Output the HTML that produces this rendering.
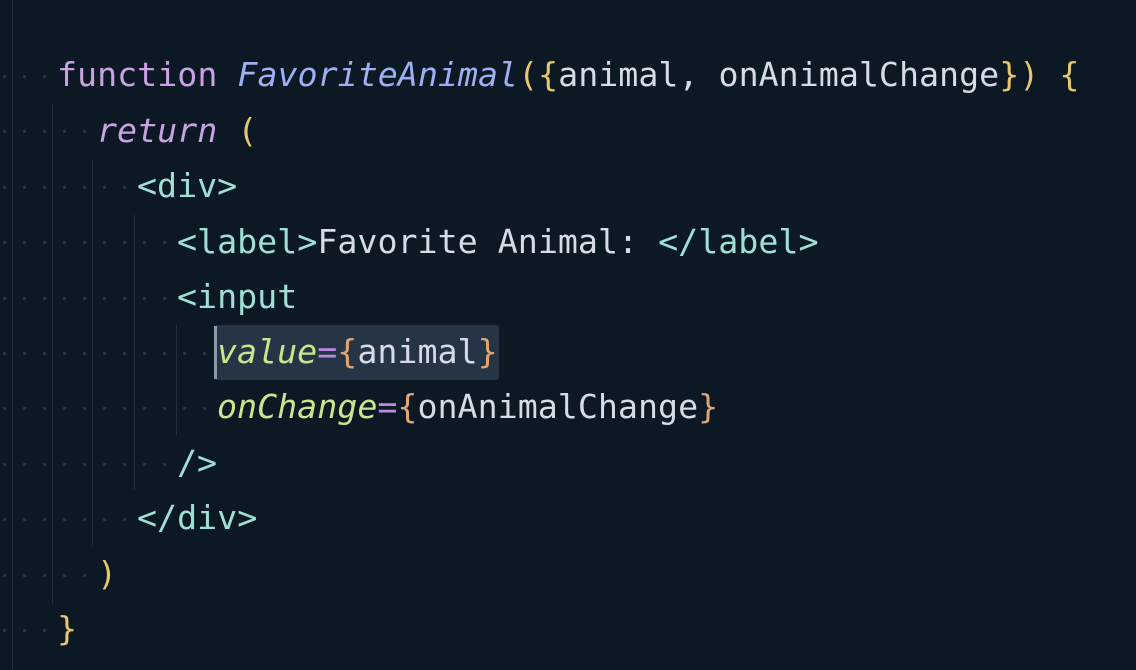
<!DOCTYPE html>
<html><head><style>
body{margin:0;width:1136px;height:670px;background:#0c1824;overflow:hidden;position:relative;font-family:"DejaVu Sans Mono","Liberation Mono",monospace}
.l{position:absolute;left:0;height:56px;line-height:56px;font-size:33.3px;white-space:pre;color:#d6dbe6}
.kw{color:#c9a2e2}.fn{color:#9db0f2;font-style:italic}.y{color:#e8c66c}.t{color:#9fe0d6}.a{color:#c9e68c;font-style:italic}.p{color:#b98ae0}.o{color:#e0a672}.i{font-style:italic}
.d{position:absolute;width:3px;height:3px;background:#24333f}
.g{position:absolute;width:1px;background:#1f3040}
</style></head><body>
<div class="g" style="left:12px;top:0;height:670px;background:#1d2e3e"></div>
<div class="g" style="left:52px;top:104px;height:500px"></div>
<div class="g" style="left:92px;top:160px;height:385px"></div>
<div class="g" style="left:134px;top:215px;height:275px"></div>
<div class="g" style="left:176px;top:325px;height:110px"></div>
<div style="position:absolute;left:214px;top:325px;width:285px;height:55px;background:#253546;border-radius:3px"></div>
<div style="position:absolute;left:214px;top:326px;width:3px;height:53px;background:#8a98a8"></div>
<div id="dots"></div>
<div class="l" style="top:47px;left:57px"><span class="kw">function</span> <span class="fn">FavoriteAnimal</span><span class="y">({</span>animal, onAnimalChange<span class="y">}) {</span></div>
<div class="l" style="top:103px;left:97px"><span class="kw i">return</span> <span class="y">(</span></div>
<div class="l" style="top:158px;left:137px"><span class="t">&lt;div&gt;</span></div>
<div class="l" style="top:214px;left:177px"><span class="t">&lt;label&gt;</span>Favorite Animal: <span class="t">&lt;/label&gt;</span></div>
<div class="l" style="top:269px;left:177px"><span class="t">&lt;input</span></div>
<div class="l" style="top:324px;left:217px"><span class="a">value</span><span class="p">=</span><span class="o">{</span>animal<span class="o">}</span></div>
<div class="l" style="top:379px;left:217px"><span class="a">onChange</span><span class="p">=</span><span class="o">{</span>onAnimalChange<span class="o">}</span></div>
<div class="l" style="top:435px;left:177px"><span class="t">/&gt;</span></div>
<div class="l" style="top:490px;left:137px"><span class="t">&lt;/div&gt;</span></div>
<div class="l" style="top:546px;left:97px"><span class="y">)</span></div>
<div class="l" style="top:601px;left:57px"><span class="y">}</span></div>
<script>
var ind=[2,4,6,8,8,10,10,8,6,4,2],h='';
for(var i=0;i<11;i++){var y=Math.round(75+i*55.4);for(var k=0;k<ind[i]+1;k++){h+='<div class="d" style="left:'+(3+20*k)+'px;top:'+y+'px"></div>';}}
document.getElementById('dots').innerHTML=h;
</script>
</body></html>
